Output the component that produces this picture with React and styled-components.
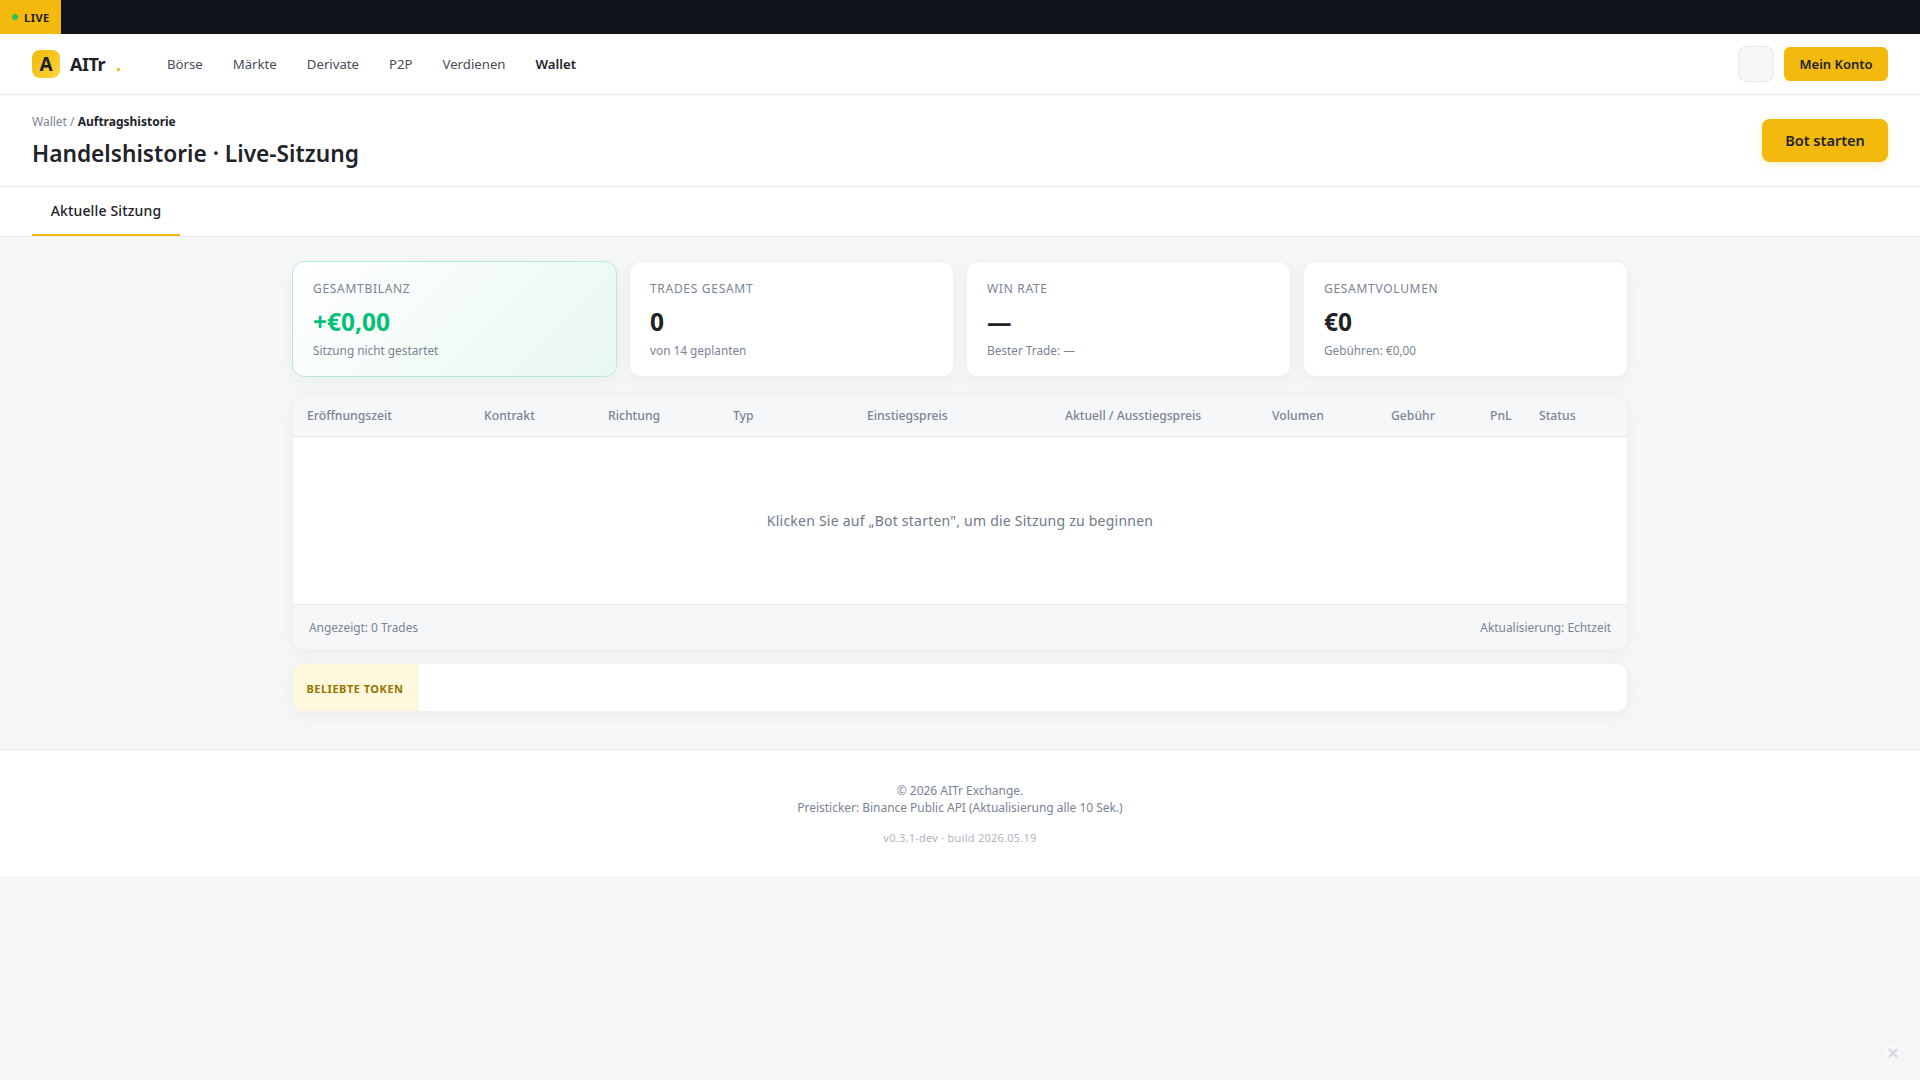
import React from 'react';
import styled, { createGlobalStyle } from 'styled-components';

const GlobalStyle = createGlobalStyle`
  html, body {
    margin: 0;
    padding: 0;
    background: #f6f7f9;
    color: #1e2329;
    font-family: "Noto Sans", "Open Sans", sans-serif;
  }
  * { box-sizing: border-box; }
`;

const Page = styled.div`
  min-height: 100vh;
  background: #f6f7f9;
`;

const TopBar = styled.div`
  height: 34px;
  background: #0f1218;
  display: flex;
`;

const LiveBadge = styled.div`
  width: 61px;
  background: #f3b90d;
  display: flex;
  align-items: center;
  gap: 6px;
  padding-left: 12px;
  font-size: 11px;
  font-weight: 700;
  letter-spacing: 0.5px;
  color: #1e2329;
`;

const LiveDot = styled.span`
  width: 6px;
  height: 6px;
  border-radius: 50%;
  background: #2bc25c;
  margin-top: -1px;
`;

const Header = styled.header`
  height: 61px;
  background: #fff;
  border-bottom: 1px solid #e9eaec;
  padding: 0 32px;
  display: flex;
  align-items: center;
`;

const Logo = styled.div`
  display: flex;
  align-items: center;
  width: 135px;
`;

const LogoMark = styled.div`
  width: 28px;
  height: 28px;
  border-radius: 8px;
  background: linear-gradient(135deg, #f0b90b, #fcd535);
  display: flex;
  align-items: center;
  justify-content: center;
  font-size: 19px;
  font-weight: 700;
  color: #1e2329;
  margin-right: 10px;
`;

const LogoText = styled.span`
  font-size: 18px;
  font-weight: 700;
  letter-spacing: -0.5px;
`;

const LogoDot = styled.span`
  font-size: 18px;
  font-weight: 700;
  color: #f0b90b;
  margin-left: 11px;
`;

const Nav = styled.nav`
  display: flex;
  gap: 30px;
  margin-top: -1px;
`;

const NavLink = styled.a`
  font-size: 13.2px;
  font-weight: ${p => (p.$active ? 600 : 400)};
  color: ${p => (p.$active ? '#1e2329' : '#474d57')};
`;

const HeaderRight = styled.div`
  margin-left: auto;
  display: flex;
  align-items: center;
  gap: 10px;
`;

const IconButton = styled.button`
  width: 36px;
  height: 36px;
  border-radius: 9px;
  background: #f6f7f9;
  border: 1px solid #e9eaec;
  padding: 0;
`;

const YellowButton = styled.button`
  border: none;
  background: #f3b90d;
  color: #1e2329;
  font-family: inherit;
  font-size: 13px;
  font-weight: 600;
  height: 34px;
  width: 104px;
  border-radius: 6px;
  padding: 0;
`;

const SubHeader = styled.div`
  height: 92px;
  background: #fff;
  border-bottom: 1px solid #e9eaec;
  padding: 0 32px;
  display: flex;
  align-items: center;
  justify-content: space-between;
`;

const TitleBlock = styled.div`
  padding-top: 2px;
`;

const Crumb = styled.div`
  font-size: 12px;
  line-height: 16px;
  color: #7a8494;
  margin-bottom: 8px;
  b {
    font-weight: 700;
    color: #1e2329;
  }
`;

const Title = styled.h1`
  margin: 0;
  font-size: 22.7px;
  line-height: 32px;
  font-weight: 600;
  color: #1e2329;
`;

const StartButton = styled.button`
  border: none;
  background: #f3b90d;
  color: #1e2329;
  font-family: inherit;
  font-size: 14.5px;
  font-weight: 600;
  width: 126px;
  height: 43px;
  border-radius: 8px;
  padding: 0 0 1px;
  box-shadow: 0 2px 8px rgba(240, 185, 11, 0.25);
`;

const Tabs = styled.div`
  height: 50px;
  background: #fff;
  border-bottom: 1px solid #e9eaec;
  padding: 0 32px;
  display: flex;
`;

const Tab = styled.div`
  height: 49px;
  width: 148px;
  display: flex;
  align-items: center;
  justify-content: center;
  font-size: 14px;
  letter-spacing: 0.15px;
  font-weight: 500;
  color: #1e2329;
  border-bottom: 2px solid ${p => (p.$active ? '#f3b90d' : 'transparent')};
`;

const Main = styled.main`
  width: 1336px;
  margin: 0 auto;
  padding: 24px 0 37px;
  display: flex;
  flex-direction: column;
`;

const Cards = styled.div`
  display: grid;
  grid-template-columns: repeat(4, 1fr);
  gap: 12px;
  margin-bottom: 18px;
`;

const Card = styled.div`
  height: 116px;
  padding: 15px 20px;
  border-radius: 12px;
  background: ${p => (p.$positive ? 'linear-gradient(135deg, #ffffff, #e8f8f0)' : '#fff')};
  border: 1px solid ${p => (p.$positive ? '#b5ecd2' : '#f0f1f3')};
  box-shadow: 0 4px 16px rgba(0, 0, 0, 0.05);
`;

const CardLabel = styled.div`
  font-size: 12px;
  line-height: 24px;
  letter-spacing: 0.7px;
  text-transform: uppercase;
  color: #7a8494;
  margin-bottom: 4px;
`;

const CardValue = styled.div`
  font-size: 24.5px;
  line-height: 34px;
  font-weight: 700;
  color: ${p => (p.$positive ? '#02c076' : '#1e2329')};
  margin-bottom: 2px;
`;

const CardSub = styled.div`
  font-size: 11.8px;
  line-height: 18px;
  color: #7a8494;
`;

const TableCard = styled.section`
  border: 1px solid #f0f1f3;
  border-radius: 12px;
  background: #fff;
  overflow: hidden;
  box-shadow: 0 4px 16px rgba(0, 0, 0, 0.05);
  margin-bottom: 13px;
`;

const TableHead = styled.div`
  height: 41px;
  background: #f6f7f9;
  border-bottom: 1px solid #e9eaec;
  display: grid;
  grid-template-columns: 177px 124px 125px 134px 198px 207px 119px 99px 49px 1fr;
  align-items: center;
  padding: 0 0 1px 14px;
`;

const HeadCell = styled.div`
  font-size: 12.2px;
  color: #7a8494;
  font-weight: 500;
  white-space: nowrap;
`;

const EmptyRow = styled.div`
  height: 167px;
  display: flex;
  align-items: center;
  justify-content: center;
  font-size: 14px;
  letter-spacing: 0.23px;
  color: #707a8a;
`;

const TableFoot = styled.div`
  height: 45px;
  background: #f6f7f9;
  border-top: 1px solid #e9eaec;
  padding: 0 16px;
  display: flex;
  align-items: center;
  justify-content: space-between;
  font-size: 11.9px;
  color: #7a8494;
`;

const TokenBar = styled.div`
  height: 49px;
  border: 1px solid #f0f1f3;
  border-radius: 12px;
  background: #fff;
  overflow: hidden;
  display: flex;
  box-shadow: 0 4px 16px rgba(0, 0, 0, 0.05);
`;

const TokenLabel = styled.div`
  width: 125px;
  padding-top: 2px;
  background: #fff8dc;
  border-right: 1px solid #f3efdc;
  display: flex;
  align-items: center;
  justify-content: center;
  font-size: 11px;
  font-weight: 700;
  letter-spacing: 0.5px;
  color: #9a7400;
  white-space: nowrap;
`;

const Footer = styled.footer`
  height: 127px;
  background: #fff;
  border-top: 1px solid #e9eaec;
  padding-top: 32px;
  text-align: center;
  font-size: 12px;
  letter-spacing: -0.03px;
  line-height: 17px;
  color: #7a8494;
`;

const BuildInfo = styled.div`
  margin-top: 13px;
  font-size: 11px;
  letter-spacing: 0.25px;
  color: #b0b5bf;
`;

const CloseCorner = styled.button`
  position: fixed;
  right: 14px;
  bottom: 14px;
  width: 26px;
  height: 26px;
  border-radius: 50%;
  background: transparent;
  border: 1px solid #f0f1f3;
  padding: 0;
  display: flex;
  align-items: center;
  justify-content: center;
  color: #d3d6dc;
`;

const columns = [
  'Eröffnungszeit', 'Kontrakt', 'Richtung', 'Typ', 'Einstiegspreis',
  'Aktuell / Ausstiegspreis', 'Volumen', 'Gebühr', 'PnL', 'Status'
];

const navItems = ['Börse', 'Märkte', 'Derivate', 'P2P', 'Verdienen', 'Wallet'];

const stats = [
  { label: 'Gesamtbilanz', value: '+€0,00', sub: 'Sitzung nicht gestartet', positive: true },
  { label: 'Trades gesamt', value: '0', sub: 'von 14 geplanten' },
  { label: 'Win Rate', value: '—', sub: 'Bester Trade: —' },
  { label: 'Gesamtvolumen', value: '€0', sub: 'Gebühren: €0,00' }
];

function App() {
  return (
    <Page>
      <GlobalStyle />
      <TopBar>
        <LiveBadge><LiveDot />LIVE</LiveBadge>
      </TopBar>
      <Header>
        <Logo>
          <LogoMark>A</LogoMark>
          <LogoText>AITr</LogoText>
          <LogoDot>.</LogoDot>
        </Logo>
        <Nav>
          {navItems.map(item => (
            <NavLink key={item} $active={item === 'Wallet'}>{item}</NavLink>
          ))}
        </Nav>
        <HeaderRight>
          <IconButton aria-label="Sprache" />
          <YellowButton>Mein Konto</YellowButton>
        </HeaderRight>
      </Header>
      <SubHeader>
        <TitleBlock>
          <Crumb>Wallet / <b>Auftragshistorie</b></Crumb>
          <Title>Handelshistorie · Live-Sitzung</Title>
        </TitleBlock>
        <StartButton>Bot starten</StartButton>
      </SubHeader>
      <Tabs>
        <Tab $active>Aktuelle Sitzung</Tab>
      </Tabs>
      <Main>
        <Cards>
          {stats.map(s => (
            <Card key={s.label} $positive={s.positive}>
              <CardLabel>{s.label}</CardLabel>
              <CardValue $positive={s.positive}>{s.value}</CardValue>
              <CardSub>{s.sub}</CardSub>
            </Card>
          ))}
        </Cards>
        <TableCard>
          <TableHead>
            {columns.map(c => <HeadCell key={c}>{c}</HeadCell>)}
          </TableHead>
          <EmptyRow>Klicken Sie auf „Bot starten", um die Sitzung zu beginnen</EmptyRow>
          <TableFoot>
            <span>Angezeigt: 0 Trades</span>
            <span>Aktualisierung: Echtzeit</span>
          </TableFoot>
        </TableCard>
        <TokenBar>
          <TokenLabel>BELIEBTE TOKEN</TokenLabel>
        </TokenBar>
      </Main>
      <Footer>
        <div>© 2026 AITr Exchange.</div>
        <div>Preisticker: Binance Public API (Aktualisierung alle 10 Sek.)</div>
        <BuildInfo>v0.3.1-dev · build 2026.05.19</BuildInfo>
      </Footer>
      <CloseCorner aria-label="Schließen">
        <svg width="10" height="10" viewBox="0 0 10 10" fill="none" stroke="currentColor" strokeWidth="2">
          <path d="M1 1l8 8M9 1l-8 8" />
        </svg>
      </CloseCorner>
    </Page>
  );
}

export default App;
